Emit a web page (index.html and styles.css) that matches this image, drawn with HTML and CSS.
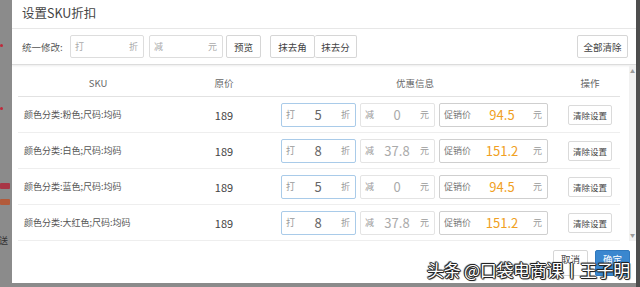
FILE: index.html
```html
<!DOCTYPE html>
<html lang="zh-CN">
<head>
  <meta charset="UTF-8" />
  <meta name="viewport" content="width=device-width, initial-scale=1.0">
  <title>设置SKU折扣</title>
  <link rel="stylesheet" href="styles.css">
</head>
<body>

  <div class="backdrop">
    <span class="dot dot-1"></span>
    <span class="dot dot-2"></span>
    <span class="tag tag-1"></span>
    <span class="tag tag-2"></span>
    <span class="side-text">送</span>
  </div>

  <div class="modal">
    <div class="modal-header">设置SKU折扣</div>

    <div class="toolbar">
      <span class="toolbar-label">统一修改:</span>
      <div class="field field-tool">
        <span class="pre">打</span><span class="val"></span><span class="suf">折</span>
      </div>
      <div class="field field-tool">
        <span class="pre">减</span><span class="val"></span><span class="suf">元</span>
      </div>
      <button class="btn btn-preview">预览</button>
      <div class="btn-group">
        <button class="btn">抹去角</button>
        <button class="btn">抹去分</button>
      </div>
      <button class="btn btn-clear-all">全部清除</button>
    </div>

    <div class="body">
      <div class="table">
        <div class="row head">
          <div class="th">SKU</div>
          <div class="th">原价</div>
          <div class="th">优惠信息</div>
          <div class="th">操作</div>
        </div>

        <div class="row">
          <div class="cell c-sku">颜色分类:粉色;尺码:均码</div>
          <div class="cell c-price">189</div>
          <div class="cell c-info">
            <div class="field field-rate active"><span class="pre">打</span><span class="val">5</span><span class="suf">折</span></div>
            <div class="field field-cut"><span class="pre">减</span><span class="val muted">0</span><span class="suf">元</span></div>
            <div class="field field-sale"><span class="pre">促销价</span><span class="val sale">94.5</span><span class="suf">元</span></div>
          </div>
          <div class="cell c-op"><button class="btn btn-reset">清除设置</button></div>
        </div>

        <div class="row">
          <div class="cell c-sku">颜色分类:白色;尺码:均码</div>
          <div class="cell c-price">189</div>
          <div class="cell c-info">
            <div class="field field-rate active"><span class="pre">打</span><span class="val">8</span><span class="suf">折</span></div>
            <div class="field field-cut"><span class="pre">减</span><span class="val muted">37.8</span><span class="suf">元</span></div>
            <div class="field field-sale"><span class="pre">促销价</span><span class="val sale">151.2</span><span class="suf">元</span></div>
          </div>
          <div class="cell c-op"><button class="btn btn-reset">清除设置</button></div>
        </div>

        <div class="row">
          <div class="cell c-sku">颜色分类:蓝色;尺码:均码</div>
          <div class="cell c-price">189</div>
          <div class="cell c-info">
            <div class="field field-rate active"><span class="pre">打</span><span class="val">5</span><span class="suf">折</span></div>
            <div class="field field-cut"><span class="pre">减</span><span class="val muted">0</span><span class="suf">元</span></div>
            <div class="field field-sale"><span class="pre">促销价</span><span class="val sale">94.5</span><span class="suf">元</span></div>
          </div>
          <div class="cell c-op"><button class="btn btn-reset">清除设置</button></div>
        </div>

        <div class="row">
          <div class="cell c-sku">颜色分类:大红色;尺码:均码</div>
          <div class="cell c-price">189</div>
          <div class="cell c-info">
            <div class="field field-rate active"><span class="pre">打</span><span class="val">8</span><span class="suf">折</span></div>
            <div class="field field-cut"><span class="pre">减</span><span class="val muted">37.8</span><span class="suf">元</span></div>
            <div class="field field-sale"><span class="pre">促销价</span><span class="val sale">151.2</span><span class="suf">元</span></div>
          </div>
          <div class="cell c-op"><button class="btn btn-reset">清除设置</button></div>
        </div>
      </div>

      <div class="scrollbar">
        <span>▲</span>
        <span>▼</span>
      </div>
    </div>

    <div class="modal-footer">
      <button class="btn btn-cancel">取消</button>
      <button class="btn btn-ok">确定</button>
    </div>

    <div class="watermark">头条 @口袋电商课丨王子明</div>
  </div>

  <div class="edge"></div>

</body>
</html>
```

FILE: styles.css
```css
* {
  box-sizing: border-box;
}
body {
  margin: 0;
  height: 287px;
  overflow: hidden;
  display: flex;
  align-items: flex-start;
  background: #8b8b8b;
  font-family: "Microsoft YaHei", "Noto Sans CJK SC", sans-serif;
  color: #333;
}

/* page behind the dialog */
.backdrop {
  width: 12px;
  height: 287px;
  display: flex;
  flex-direction: column;
  align-items: flex-start;
}
.dot {
  width: 3px;
  height: 3px;
  border-radius: 50%;
  background: #c0283a;
}
.dot-1 { margin-top: 44px; }
.dot-2 { margin-top: 60px; }
.tag {
  width: 10px;
  height: 6px;
  background: #a83646;
  border-radius: 1px;
}
.tag-1 { margin-top: 73px; }
.tag-2 { margin-top: 10px; background: #b25a3a; }
.side-text {
  margin-top: 29px;
  font-size: 9px;
  color: #333;
  margin-left: -1px;
}
.edge {
  width: 4px;
  height: 287px;
  background: #4e4e4e;
}

/* dialog */
.modal {
  position: relative;
  width: 624px;
  height: 283px;
  background: #fff;
  display: flex;
  flex-direction: column;
}
.modal-header {
  height: 29px;
  padding-left: 10px;
  line-height: 26px;
  font-size: 12.5px;
  color: #444;
  border-bottom: 1px solid #e8e8e8;
}

.toolbar {
  height: 36px;
  display: flex;
  align-items: center;
  padding: 0 8px 0 10px;
  border-bottom: 1px solid #dcdcdc;
  box-shadow: 0 1px 2px rgba(0,0,0,0.08);
}
.toolbar-label {
  width: 48px;
  font-size: 9.5px;
  color: #555;
}

.field {
  height: 24px;
  border: 1px solid #ddd;
  border-radius: 2px;
  display: flex;
  align-items: center;
  font-size: 9px;
  color: #999;
}
.field .pre {
  padding-left: 4px;
}
.field .suf {
  padding-right: 5px;
}
.field .val {
  flex: 1;
  text-align: center;
  font-size: 13px;
  color: #666;
}
.field .val.muted {
  color: #aaa;
}
.field .val.sale {
  color: #f0a022;
}
.field-tool {
  width: 74px;
  height: 23px;
  margin-right: 5px;
  color: #aaa;
}
.field-tool + .field-tool {
  margin-right: 3px;
}

.btn {
  font-family: inherit;
  font-size: 9.5px;
  color: #444;
  background: #fff;
  border: 1px solid #d6d6d6;
  border-radius: 2px;
  padding: 0;
  height: 23px;
}
.btn-preview {
  width: 35px;
}
.btn-group {
  display: flex;
  margin-left: 9px;
}
.btn-group .btn {
  width: 45px;
}
.btn-group .btn + .btn {
  width: 42px;
  border-left: none;
}
.btn-clear-all {
  width: 51px;
  margin-left: auto;
}

/* table */
.body {
  flex: 1;
  display: flex;
  padding-left: 6px;
}
.table {
  width: 602px;
}
.row {
  display: grid;
  grid-template-columns: 160px 92px 290px 60px;
  height: 36px;
  align-items: center;
  border-bottom: 1px solid #eee;
}
.row.head {
  height: 32px;
  padding-top: 4px;
  border-bottom-color: #e2e2e2;
}
.th {
  text-align: center;
  font-size: 9.5px;
  color: #666;
}
.c-sku {
  padding-left: 6px;
  font-size: 9px;
  color: #555;
}
.c-price {
  text-align: center;
  font-size: 11px;
  color: #444;
}
.c-info {
  display: flex;
  gap: 4px;
  padding-left: 11px;
}
.field-rate,
.field-cut {
  width: 75px;
}
.field-rate.active {
  border-color: #a9cbe9;
}
.field-cut {
  border-color: #e4e4e4;
}
.field-sale {
  width: 109px;
  border-color: #cfcfcf;
}
.field-sale .pre {
  color: #777;
}
.c-op {
  display: flex;
  justify-content: center;
}
.btn-reset {
  width: 44px;
  height: 20px;
  font-size: 8.5px;
  border-color: #dadada;
}

.scrollbar {
  width: 7px;
  margin-left: auto;
  background: #f1f1f1;
  display: flex;
  flex-direction: column;
  justify-content: space-between;
  align-items: center;
  font-size: 5px;
  color: #9a9a9a;
  padding: 2px 0 3px;
}

.modal-footer {
  height: 42px;
  display: flex;
  justify-content: flex-end;
  align-items: flex-start;
  gap: 7px;
  padding: 9px 6px 0 0;
}
.btn-cancel,
.btn-ok {
  width: 35px;
  height: 26px;
  line-height: 1;
  padding-bottom: 6px;
}
.btn-ok {
  background: #3a87cf;
  border-color: #2f78bd;
  color: #fff;
}

.watermark {
  position: absolute;
  right: 6px;
  bottom: 1px;
  font-size: 17px;
  color: #fff;
  letter-spacing: -0.3px;
  text-shadow: 1px 0 0 #222, -1px 0 0 #222, 0 1px 0 #222, 0 -1px 0 #222,
    1px 1px 1px #222, -1px -1px 1px #222;
}
```
